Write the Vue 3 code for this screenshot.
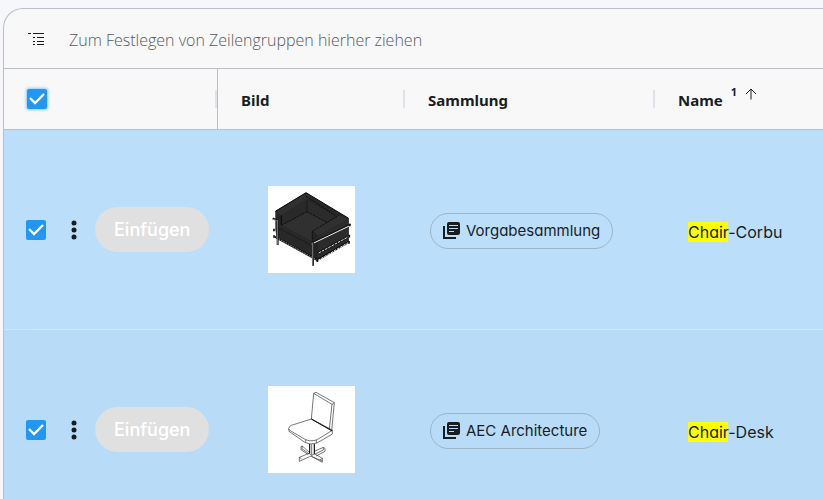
<script setup>
import { ref } from 'vue'

const rows = ref([
  { id: 'corbu', checked: true, collection: 'Vorgabesammlung', match: 'Chair', rest: '-Corbu' },
  { id: 'desk', checked: true, collection: 'AEC Architecture', match: 'Chair', rest: '-Desk' },
])
const allChecked = ref(true)
</script>

<template>
  <main class="page">
    <section class="grid">
      <div class="group-bar">
        <svg class="group-icon" viewBox="0 0 18 16" aria-hidden="true">
          <path d="M0 2.5h3M5 2.5h11M5 6.5h2M9 6.5h7M5 10.500h2M9 10.500h7M5 13.500h2M9 13.500h7" />
        </svg>
        <span>Zum Festlegen von Zeilengruppen hierher ziehen</span>
      </div>
      <table>
        <colgroup>
          <col class="col-actions" />
          <col class="col-image" />
          <col class="col-collection" />
          <col />
        </colgroup>
        <thead>
          <tr>
            <th class="actions-head">
              <div class="head">
                <input v-model="allChecked" type="checkbox" class="check focused" aria-label="Alle auswählen" />
                <span class="separator"></span>
              </div>
            </th>
            <th><div class="head"><span class="label">Bild</span><span class="separator"></span></div></th>
            <th><div class="head"><span class="label">Sammlung</span><span class="separator"></span></div></th>
            <th>
              <div class="head sorted">
                <span class="label">Name</span>
                <span class="order">1</span>
                <svg class="arrow" viewBox="0 0 12 12" aria-hidden="true"><path d="M6 11.500V1M1 6l5-5 5 5" /></svg>
              </div>
            </th>
          </tr>
        </thead>
        <tbody>
          <tr v-for="row in rows" :key="row.id">
            <td>
              <div class="actions">
                <input v-model="row.checked" type="checkbox" class="check" aria-label="Zeile auswählen" />
                <button class="more" type="button" aria-label="Weitere Aktionen">
                  <svg viewBox="0 0 6 20" aria-hidden="true">
                    <circle cx="3" cy="3" r="2.500" /><circle cx="3" cy="10" r="2.500" /><circle cx="3" cy="17" r="2.500" />
                  </svg>
                </button>
                <button class="insert" type="button" disabled>Einfügen</button>
              </div>
            </td>
            <td class="image-cell">
              <svg v-if="row.id === 'corbu'" class="thumb" viewBox="0 0 261 261" role="img" aria-label="Chair-Corbu">
                <path fill="#272727" d="M22 76l92-56 128 77v72l-94 55-122-68-4-26z" />
                <path fill="#303030" d="M22 76l92-56 14 9v10L40 88z" />
                <path fill="#292929" d="M40 88l74-48 3 37-77 42z" />
                <path fill="#2b2b2b" d="M117 41l84 48-23 22-61-34z" />
                <path fill="#303030" d="M40 118l77-41 61 33-45 26v32z" />
                <path fill="#282828" d="M40 118l93 48v43L30 153z" />
                <path fill="#303030" d="M133 136l79-48 30 10-92 51z" />
                <path fill="#242424" d="M133 136l17 12v74l-17-9z" />
                <path fill="#2b2b2b" d="M150 149l92-51v71l-92 54z" />
                <path fill="none" stroke="#080808" stroke-width="3" d="M22 76l92-56 128 77M40 88v28" />
                <path fill="none" stroke="#0b0b0b" stroke-width="3" stroke-dasharray="6 3" d="M114 31l87 57M40 118l77-41 61 33M133 136l79-48M133 136v34" />
                <path fill="none" stroke="#151515" stroke-width="2" d="M117 40v37M30 125l103 55" />
                <path fill="none" stroke="#080808" stroke-width="6" d="M20 152l128 70 96-55M150 201l94-50" />
                <path fill="none" stroke="#999" stroke-width="3" stroke-dasharray="5 3" d="M18 150l130 73" />
                <path fill="none" stroke="#eee" stroke-width="3" stroke-dasharray="8 3" d="M150 223l94-55M152 201l90-49" />
                <path fill="none" stroke="#181818" stroke-width="6" d="M131 171l117-56M14 97l16 7" />
                <path fill="none" stroke="#eee" stroke-width="3" d="M131 174l117-56" />
                <path fill="none" stroke="#bbb" stroke-width="2" d="M14 99l16 7" />
                <path fill="none" stroke="#222" stroke-width="6" d="M29 99v78M135 168v71" />
                <path fill="none" stroke="#aaa" stroke-width="2" d="M28 102v74M134 170v68" />
                <path fill="none" stroke="#111" stroke-width="5" d="M18 128v8M18 148v7M244 146v8M243 165v8M148 219v9M245 113v8" />
              </svg>
              <svg v-else class="thumb line" viewBox="24 18 261 261" role="img" aria-label="Chair-Desk">
                <path d="M161 40l7-3 55 31-7 5zM161 40l-7 77 61 35 8-84M216 73l-8 74M154 117l-60 19q-7 3-8 10l1 8 49 34 17 4 18-3 46-27v-12l-63-33M86 147q2 4 8 7l43 25q11 5 22 3 8-1 14-4l44-27M137 179v9M169 180v9" />
                <path d="M149 192v29l6 5 8-4v-30M155 193v33M149 218l-22-20-4 1v10l22 15M163 214l27-12 5 3v9l-27 14M149 219l-31 13v12l35-16M163 221l24 14v12l-32-18M118 232l6 4M187 235l-7 5M127 198l-1 8 22 16M190 202v8l-27 13M153 229l34 14" />
                <path class="heavy" d="M154 117l61 35M149 192v28M163 192v29" />
              </svg>
            </td>
            <td class="collection-cell">
              <span class="chip">
                <svg viewBox="0 0 17 17" aria-hidden="true">
                  <path class="outline" d="M1 4v12h12" />
                  <rect x="4" y="0" width="13" height="13" rx="2" />
                  <path class="lines" d="M6 3.500h9M6 6.500h9M6 9.500h5" />
                </svg>
                {{ row.collection }}
              </span>
            </td>
            <td class="name-cell"><mark>{{ row.match }}</mark>{{ row.rest }}</td>
          </tr>
        </tbody>
      </table>
    </section>
  </main>
</template>

<style>
body {
  margin: 0;
  overflow: hidden;
  background: #f5f7fa;
}
</style>

<style scoped>
.page {
  height: 100vh;
  box-sizing: border-box;
  padding: 8px 0 0 3px;
  overflow: hidden;
  color: #181d1f;
  font-family: Inter, "Liberation Sans", sans-serif;
}
.grid {
  border: 1px solid #babfc7;
  border-right: 0;
  border-radius: 20px 0 0 0;
  overflow: hidden;
  background: #f8f8f8;
}
.group-bar {
  display: flex;
  align-items: center;
  gap: 23px;
  height: 59px;
  padding: 2px 24px 0;
  box-sizing: border-box;
  color: #565a5b;
  font: 300 16px "Open Sans", "Noto Sans", sans-serif;
}
.group-icon {
  width: 18px;
  height: 16px;
  margin-top: -2px;
  fill: none;
  stroke: #181d1f;
}
table {
  width: 100%;
  table-layout: fixed;
  border-collapse: separate;
  border-spacing: 0;
}
.col-actions { width: 214px; }
.col-image { width: 187px; }
.col-collection { width: 250px; }
th {
  height: 60px;
  padding: 0;
  border-top: 1px solid #babfc7;
  border-bottom: 1px solid #babfc7;
  font: 700 15px "Noto Sans", "Open Sans", sans-serif;
  text-align: left;
}
.actions-head { border-right: 1px solid #babfc7; }
.head {
  display: flex;
  align-items: center;
  padding-left: 23px;
}
.label { padding-top: 2px; }
.separator {
  width: 2px;
  height: 18px;
  margin-left: auto;
  background: #dde2eb;
}
.sorted { gap: 8px; }
.order {
  margin-bottom: 16px;
  font-size: 11px;
}
.arrow {
  width: 12px;
  height: 12px;
  margin-bottom: 10px;
  fill: none;
  stroke: #181d1f;
}
.check {
  appearance: none;
  flex: none;
  width: 20px;
  height: 20px;
  margin: 0;
  border: 2px solid #999;
  border-radius: 2px;
  background: #fff;
}
.check:checked {
  border: 0;
  background: #2196f3 url("data:image/svg+xml,%3Csvg xmlns='http://www.w3.org/2000/svg' viewBox='0 0 20 20'%3E%3Cpath d='M3 9l5 5L17 5' fill='none' stroke='white' stroke-width='2.4'/%3E%3C/svg%3E");
}
.check.focused { box-shadow: 0 0 3px 1px #8fc8f6; }
td {
  box-sizing: border-box;
  height: 200px;
  padding: 0;
  border-bottom: 1px solid #d5e4f2;
  background: #bbdefb;
}
tbody tr:nth-child(even) td { background: #b8dcf8; }
.actions {
  display: flex;
  align-items: center;
  padding-left: 22px;
}
.more {
  display: flex;
  margin-left: 25px;
  padding: 0;
  border: 0;
  background: none;
}
.more svg {
  width: 6px;
  height: 20px;
  fill: #181d1f;
}
.insert {
  height: 45px;
  margin-left: 18px;
  padding: 0 19px;
  border: 0;
  border-radius: 23px;
  background: #e0e0e0;
  color: #fff;
  font: 500 18px Inter, "Liberation Sans", sans-serif;
}
.image-cell { padding-left: 50px; }
.thumb {
  display: block;
  width: 87px;
  height: 87px;
  background: #fff;
}
.line path {
  fill: none;
  stroke: #333;
  stroke-width: 2;
}
.line .heavy {
  stroke: #111;
  stroke-width: 3;
}
.collection-cell { padding: 2px 0 0 25px; }
.chip {
  display: inline-flex;
  align-items: center;
  gap: 6px;
  height: 36px;
  box-sizing: border-box;
  padding: 0 12px;
  border: 1px solid #9eb3c4;
  border-radius: 18px;
  font-size: 15px;
  font-feature-settings: "cv11";
  vertical-align: middle;
}
.chip svg {
  width: 17px;
  height: 17px;
  fill: #181d1f;
}
.chip .outline {
  fill: none;
  stroke: #181d1f;
  stroke-width: 2;
}
.chip .lines {
  stroke: #bbdefb;
  stroke-width: 1;
}
.name-cell {
  padding: 4px 0 0 33px;
  font-size: 16px;
  font-feature-settings: "cv11";
}
mark {
  background: #ff0;
  color: #181d1f;
}
</style>
